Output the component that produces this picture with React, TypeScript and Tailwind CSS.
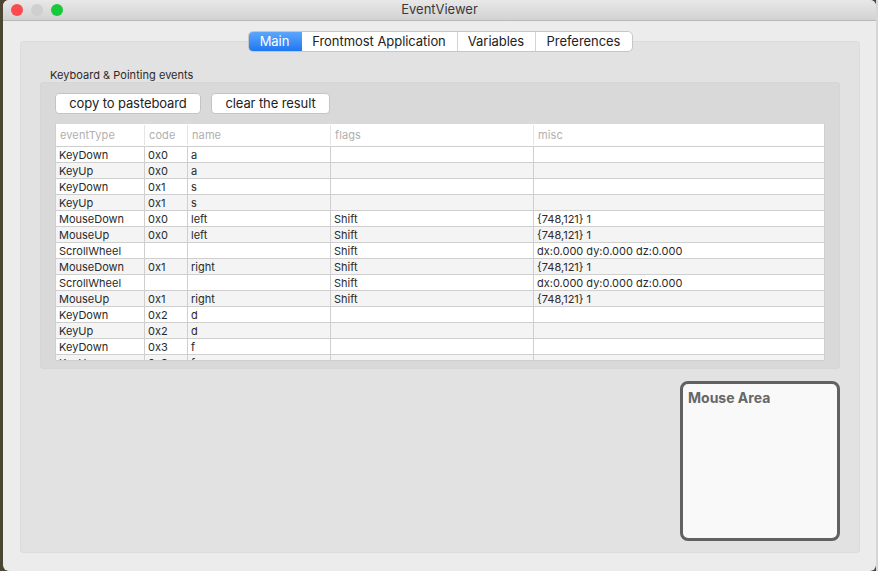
const rows: [string, string, string, string, string][] = [
  ["KeyDown", "0x0", "a", "", ""],
  ["KeyUp", "0x0", "a", "", ""],
  ["KeyDown", "0x1", "s", "", ""],
  ["KeyUp", "0x1", "s", "", ""],
  ["MouseDown", "0x0", "left", "Shift", "{748,121} 1"],
  ["MouseUp", "0x0", "left", "Shift", "{748,121} 1"],
  ["ScrollWheel", "", "", "Shift", "dx:0.000 dy:0.000 dz:0.000"],
  ["MouseDown", "0x1", "right", "Shift", "{748,121} 1"],
  ["ScrollWheel", "", "", "Shift", "dx:0.000 dy:0.000 dz:0.000"],
  ["MouseUp", "0x1", "right", "Shift", "{748,121} 1"],
  ["KeyDown", "0x2", "d", "", ""],
  ["KeyUp", "0x2", "d", "", ""],
  ["KeyDown", "0x3", "f", "", ""],
  ["KeyUp", "0x3", "f", "", ""],
];

const widths = ["w-[89px]", "w-[43px]", "w-[143px]", "w-[203px]", "flex-1"];
const headers = ["eventType", "code", "name", "flags", "misc"];

function Row({ r, i }: { r: string[]; i: number }) {
  return (
    <div className={`flex h-[16px] shrink-0 border-b border-[#cfcfcf] text-[11px] leading-[17px] text-[#2a2a2a] ${i % 2 ? "bg-[#f4f4f4]" : "bg-white"}`}>
      {r.map((c, j) => (
        <div key={j} className={`${widths[j]} shrink-0 pl-[3px] whitespace-nowrap ${j < 4 ? "border-r border-[#cfcfcf]" : ""}`}>
          {c}
        </div>
      ))}
    </div>
  );
}

export default function App() {
  return (
    <div className="flex h-[571px] w-[878px] overflow-hidden bg-[#4a4632] pl-[3px]" style={{ fontFamily: "Inter, 'Liberation Sans', sans-serif" }}>
      <div className="flex h-[571px] w-[873px] shrink-0 flex-col overflow-hidden rounded-[6px] bg-[#ececec]">
        <div className="relative flex h-[21px] shrink-0 items-center justify-center border-b border-[#b8b8b8] bg-gradient-to-b from-[#e9e8e9] to-[#d3d2d3] text-[13px] text-[#3a3a3a]">
          <div className="absolute left-[8px] top-[4px] flex gap-[8px]">
            <span className="h-[12px] w-[12px] rounded-full bg-[#fb4b4e]" />
            <span className="h-[12px] w-[12px] rounded-full bg-[#cfcfcf]" />
            <span className="h-[12px] w-[12px] rounded-full bg-[#19c93c]" />
          </div>
          EventViewer
        </div>
        <div className="ml-[17px] mr-[16px] mt-[20px] flex h-[512px] flex-col rounded-[3px] border border-[#dcdcdc] bg-[#e2e2e2] px-[19px]">
          <div className="relative z-10 mx-auto -mt-[11px] flex h-[21px] w-[385px] overflow-hidden rounded-[5px] border border-[#c6c6c6] bg-white text-[13px] leading-[19px] tracking-[-0.05px] text-[#222]">
            <div className="-my-px -ml-px h-[21px] w-[54px] bg-gradient-to-b from-[#5fa9fb] to-[#1a74f2] text-center leading-[21px] text-white">Main</div>
            <div className="w-[156px] border-r border-[#d4d4d4] text-center">Frontmost Application</div>
            <div className="w-[78px] border-r border-[#d4d4d4] text-center">Variables</div>
            <div className="flex-1 text-center">Preferences</div>
          </div>
          <div className="ml-[10px] mt-[14px] h-[16px] text-[11px] leading-[18px] tracking-[0.03px] text-[#2a2a2a]">Keyboard &amp; Pointing events</div>
          <div className="flex h-[287px] shrink-0 flex-col rounded-[3px] border border-[#d6d6d6] bg-[#d9d9d9] px-[14px] pt-[10px]">
            <div className="flex gap-[10px]">
              <button className="h-[21px] w-[146px] rounded-[4px] border border-[#c4c4c4] bg-white text-[13px] leading-[19px] tracking-[-0.1px] text-[#222]">copy to pasteboard</button>
              <button className="h-[21px] w-[119px] rounded-[4px] border border-[#c4c4c4] bg-white text-[13px] leading-[19px] tracking-[-0.1px] text-[#222]">clear the result</button>
            </div>
            <div className="mt-[10px] flex h-[237px] w-[770px] flex-col overflow-hidden border border-t-0 border-[#cfcfcf] bg-white">
              <div className="flex h-[23px] shrink-0 items-center border-b border-[#cfcfcf] text-[11px] tracking-[0.1px] text-[#b0b0b0]">
                {headers.map((h, j) => (
                  <div key={h} className={`${widths[j]} shrink-0 pl-[4px] leading-[20px] ${j < 4 ? "border-r border-[#e6e6e6]" : ""}`}>{h}</div>
                ))}
              </div>
              {rows.map((r, i) => (
                <Row key={i} r={r} i={i} />
              ))}
            </div>
          </div>
          <div className="mt-[12px] flex justify-end">
            <div className="h-[160px] w-[160px] rounded-[8px] border-[3px] border-[#616161] bg-[#f9f9f9] px-[5px] pt-[4px] text-[14px] font-bold leading-[20px] text-[#666]">Mouse Area</div>
          </div>
        </div>
      </div>
      <div className="h-[571px] flex-1 bg-[#d6d6d6]" />
    </div>
  );
}
